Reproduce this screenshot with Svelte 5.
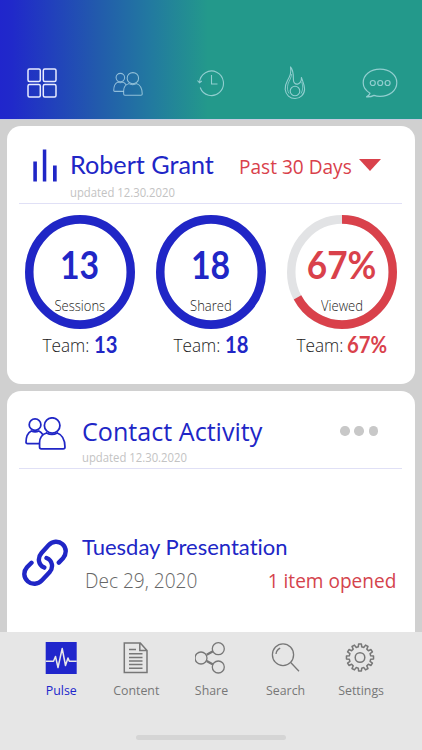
<script>
  const metrics = [
    { value: '13', label: 'Sessions', team: '13', percent: 100, tone: 'blue' },
    { value: '18', label: 'Shared', team: '18', percent: 100, tone: 'blue' },
    { value: '67%', label: 'Viewed', team: '67%', percent: 67, tone: 'red' }
  ];
  const tabs = ['Pulse', 'Content', 'Share', 'Search', 'Settings'];

  // Outline of a gear with square teeth, centred on the origin.
  function gear(teeth, outer, inner) {
    const step = (Math.PI * 2) / teeth;
    const points = [];
    for (let i = 0; i < teeth; i++) {
      const a = i * step - Math.PI / 2;
      for (const [offset, r] of [[-0.3, inner], [-0.2, outer], [0.2, outer], [0.3, inner]]) {
        points.push(`${(Math.cos(a + offset * step) * r).toFixed(2)} ${(Math.sin(a + offset * step) * r).toFixed(2)}`);
      }
    }
    return `M${points.join('L')}Z`;
  }
  const gearPath = gear(12, 13.6, 10.8);
</script>

{#snippet people(width, height, stroke)}
  <svg {width} {height} viewBox="0 0 40 32" preserveAspectRatio="none" fill="none" stroke="currentColor" stroke-width={stroke} stroke-linejoin="round" stroke-linecap="round">
    <ellipse cx="26.5" cy="8.2" rx="7.6" ry="7.4" />
    <path d="M21 15.5C16.500 17 14.200 20.500 14.200 25v4.200c0 1 .7 1.700 1.700 1.700h21.400c1 0 1.700-.7 1.700-1.700C39 22 37 17.500 31.500 15.500M21 15.500c3 1.600 7.500 1.600 10.500 0" />
    <ellipse cx="9.800" cy="7.400" rx="5.700" ry="5.600" />
    <path d="M13.500 25.800H2.300c-.8 0-1.300-.5-1.300-1.300C1 19 2.500 15.300 6.200 13.500c2.300 1.200 5 1.200 7.300 0c1.500.7 2.700 1.700 3.600 3.200" />
  </svg>
{/snippet}

<div class="screen">
  <header>
    <div class="slot active">
      <svg width="30" height="30" viewBox="0 0 30 30" fill="none" stroke="currentColor" stroke-width="1.5">
        <rect x="1" y="1" width="12.300" height="12.500" rx="1.500" />
        <rect x="16.300" y="1" width="12.700" height="12.500" rx="1.500" />
        <rect x="1" y="16.400" width="12.300" height="12.500" rx="1.500" />
        <rect x="16.300" y="16.400" width="12.700" height="12.500" rx="1.500" />
      </svg>
    </div>
    <div class="slot group">{@render people(30, 24, 1.4)}</div>
    <div class="slot">
      <svg width="28" height="28" viewBox="0 0 28 28" fill="none" stroke="currentColor" stroke-width="1.1">
        <path d="M2.500 13.500A12 12.300 0 1 1 3.200 18.500M.5 11.500l2 2.300 2.300-1.800M14.500 6v9h6" />
      </svg>
    </div>
    <div class="slot flame">
      <svg width="22" height="34" viewBox="0 0 22 34" fill="none" stroke="currentColor" stroke-width="1.100" stroke-linejoin="round">
        <path d="M6.500 1C7.500 7 6 10 3.500 14.500c-2 3.500-2.600 5.500-2.300 9C1.800 29 6 32.500 11 32.500s9.600-4 9.600-9.500c0-4-1.600-7-3.200-11.500c.2 3-.8 5.500-3.400 6.500c-3 .8-4.600-1.500-4.600-4.500C9.400 8 9.500 4 6.500 1Z" />
        <path d="M7.500 8c.3 3-2.500 7-3.500 10c-1 4-.6 7 1 9.500M17.800 16c1.200 4 1.400 8-.8 11.500" stroke-width=".8" />
        <ellipse cx="11" cy="25" rx="4.800" ry="4.800" />
      </svg>
    </div>
    <div class="slot">
      <svg width="36" height="30" viewBox="0 0 36 30" fill="none" stroke="currentColor" stroke-width="1.200" stroke-linejoin="round">
        <path d="M8 25.300C3.500 22.500 1.200 19 1.200 14.800C1.200 7 8.500 1.200 18 1.200s16.800 5.800 16.800 13.600S27.500 28.300 18 28.300c-2.200 0-4.200-.3-6-.9c-2.300 1.200-4.800 1.600-7.500 1.400c2-.8 3-1.900 3.500-3.500Z" />
        <circle cx="10.800" cy="15" r="2.500" /><circle cx="18.200" cy="15" r="2.500" /><circle cx="25.600" cy="15" r="2.500" />
      </svg>
    </div>
  </header>

  <main>
    <section class="card summary">
      <div class="head">
        <svg class="bars" width="25" height="33" viewBox="0 0 25 33" fill="currentColor">
          <rect x="0.300" y="12.500" width="3.600" height="20" /><rect x="9.800" y="0.500" width="3.500" height="32" /><rect x="20" y="16.500" width="3.700" height="16" />
        </svg>
        <div class="titles">
          <h1><span>Robert Grant</span></h1>
          <p class="updated"><span>updated 12.30.2020</span></p>
        </div>
        <button class="range">
          <span>Past 30 Days</span>
          <svg width="22" height="12" viewBox="0 0 22 12"><path d="M0 0H22L11 12Z" fill="currentColor" /></svg>
        </button>
      </div>
      <div class="metrics">
        {#each metrics as m}
          <div class="metric {m.tone}">
            <div class="ring">
              <svg width="110" height="114" viewBox="0 0 114 114" preserveAspectRatio="none" fill="none" stroke-width="8.800">
                <circle cx="57" cy="57" r="52.600" stroke="#e2e3e5" />
                <circle cx="57" cy="57" r="52.600" stroke="currentColor" pathLength="100" stroke-dasharray={m.percent === 100 ? 'none' : `${m.percent} 100`} transform="rotate(-90 57 57)" />
              </svg>
              <div class="reading">
                <strong>{m.value}</strong>
                <span>{m.label}</span>
              </div>
            </div>
            <p class="team"><span>Team:</span><b>{m.team}</b></p>
          </div>
        {/each}
      </div>
    </section>

    <section class="card activity">
      <div class="head">
        <div class="icon">{@render people(41, 33, 1.7)}</div>
        <div class="titles">
          <h2><span>Contact Activity</span></h2>
          <p class="updated"><span>updated 12.30.2020</span></p>
        </div>
        <div class="more"><i></i><i></i><i></i></div>
      </div>
      <div class="item">
        <svg width="46" height="48" viewBox="0 0 46 48" fill="none" stroke="currentColor" stroke-width="4.400" stroke-linecap="round">
          <path d="M22.300 28.600C15.800 25.500 15.500 18.500 19.500 14L26.500 6.300C30.500 2 36.500 1.600 40.500 5.200C44.700 9 44.700 15 41 19.300L36.800 23.600" />
          <path d="M24.500 19C30.800 21.500 31.600 28.600 27.500 33.300L20 41.300C16 45.500 10 46 5.800 42.300C1.300 38.300 1.300 32.500 5 28.300L9.500 23.800" />
        </svg>
        <div class="detail">
          <h3><span>Tuesday Presentation</span></h3>
          <div class="meta">
            <span class="date">Dec 29, 2020</span>
            <span class="opened">1 item opened</span>
          </div>
        </div>
      </div>
    </section>
  </main>

  <nav>
    <ul>
      {#each tabs as tab, i}
        <li class:selected={i === 0}>
          <svg width="32" height="34" viewBox="0 0 32 34" fill="none" stroke="currentColor" stroke-width="1.300">
            {#if tab === 'Pulse'}
              <rect x="0.700" y="1" width="31" height="32" fill="currentColor" stroke="none" />
              <path d="M.7 20.300H8.500L10.500 15.500 13 26.500 17.200 7.500 20.500 24.500 23 17 24.300 20.300H31.700" stroke="#e8e8e8" stroke-width="1.500" stroke-linejoin="round" />
            {:else if tab === 'Content'}
              <path d="M4.300 2H20.300L27 9.500V31.500H4.300ZM19.800 2V9.500H27" stroke-width="1.500" />
              <path d="M9 8.500H16M9 12.800H22.500M9 16.500H22.500M9 20H22.500M9 23.500H22.500M9 27.300H22.500" stroke-width="1.500" />
            {:else if tab === 'Share'}
              <circle cx="6" cy="17" r="6" /><circle cx="23.300" cy="7.700" r="6" /><circle cx="23.300" cy="26" r="6" />
              <path d="M11.700 13.700L18 10.300M11.700 20L18 23.500" stroke-width="2.400" />
            {:else if tab === 'Search'}
              <ellipse cx="13" cy="13.700" rx="10.600" ry="10.900" /><path d="M20.700 21.500L29 30.300M6 13c.3-2.800 1.800-4.800 4.200-5.900" />
            {:else}
              <g transform="translate(15 16.500)"><path d={gearPath} stroke-linejoin="round" stroke-width="1.500" /><circle r="4.800" stroke-width="1.500" /></g>
            {/if}
          </svg>
          <span>{tab}</span>
        </li>
      {/each}
    </ul>
    <div class="home"></div>
  </nav>
</div>

<style>
  :global(body) { margin: 0; }
  .screen {
    width: 422px; height: 750px; overflow: hidden;
    display: flex; flex-direction: column;
    background: #d0d0d0; font-family: 'Open Sans', 'Noto Sans', sans-serif;
  }
  svg { display: block; flex: none; }
  h1, h2, h3, p, ul { margin: 0; padding: 0; font-weight: 400; }
  h1 span, h2 span, h3 span, .updated span, .range span, .date, .opened { display: inline-block; white-space: nowrap; transform-origin: left; }

  header {
    flex: none; box-sizing: border-box; height: 119px; padding-top: 46px;
    display: grid; grid-template-columns: repeat(5, 1fr);
    background: linear-gradient(90deg, #2026cc 0, #2029ca 12px, #2259ad 95px, #2279a0 150px, #23998b 208px);
    box-shadow: 0 1px 0 #c6cbe0;
  }
  .slot { display: flex; align-items: center; justify-content: center; color: rgba(205, 235, 245, .65); }
  .slot.active { color: #e8ecff; }
  .slot.group { padding: 3px 0 0 2px; }

  main { flex: 1; min-height: 0; margin-top: 1px; padding: 6px 7px 0; display: flex; flex-direction: column; gap: 7px; overflow: hidden; }
  .card { flex: none; background: #fff; border-radius: 14px; color: #2026c6; }
  .summary { height: 258px; }
  .activity { height: 280px; }
  .head { display: flex; box-sizing: border-box; margin: 0 13px 0 12px; height: 78px; border-bottom: 1.500px solid #e0e0f6; }

  .bars { margin: 23px 12px 0 14px; }
  .titles { flex: 1; }
  .summary .titles { padding-top: 25px; }
  h1 { height: 28px; font: 400 24.500px/28px Lato, sans-serif; }
  h1 span { transform: scaleX(1.028); }
  .updated { height: 14px; font-size: 12px; line-height: 14px; color: #c3c3c3; }
  .updated span { transform: scaleX(.942); }
  .summary .updated { margin-top: 7px; }
  .range {
    display: flex; align-items: center; gap: 6px; height: 28px; margin: 26px 21px 0 0; padding: 0;
    border: 0; background: none; color: #d9414b; font: 400 20.500px/28px 'Open Sans', sans-serif;
  }
  .range span { width: 114px; transform: scaleX(.93); }
  .range svg { margin-top: -2px; }

  .metrics { display: flex; padding: 10px 7.500px 0; }
  .metric { width: 131px; display: flex; flex-direction: column; align-items: center; }
  .red { color: #d9414b; }
  .blue { color: #2026c6; }
  .ring { display: grid; width: 110px; height: 114px; margin-top: .5px; }
  .ring > * { grid-area: 1 / 1; }
  .reading { display: flex; flex-direction: column; align-items: center; padding-top: 29.500px; }
  .reading strong { font: 700 38px/40px Lato, sans-serif; transform: scaleX(.925); }
  .blue .reading strong { transform: translateX(-.5px) scaleX(.89); }
  .reading span { margin-top: 12.500px; font-size: 14.300px; line-height: 18px; font-weight: 300; color: #222; transform: scaleX(.91); }
  .team { display: flex; justify-content: center; margin-top: 4.500px; height: 24px; line-height: 24px; font-size: 18.500px; font-weight: 300; color: #222; white-space: nowrap; }
  .team span { transform: scaleX(.93); transform-origin: right; }
  .team b { font: 700 23px/23px Lato, sans-serif; margin-left: 4px; transform: scaleX(.88); transform-origin: left; }
  .red .team { margin-left: 2px; }
  .blue b { color: #2026c6; }
  .red b { color: #d9414b; }

  .activity .icon { margin: 26px 16px 0 6px; }
  .activity .titles { padding-top: 24px; }
  h2 { height: 32px; font-size: 26px; line-height: 32px; }
  h2 span { transform: scaleX(.966); }
  .activity .updated { margin-top: 4px; }
  .more { display: flex; gap: 4.700px; margin: 35px 24px 0 0; }
  .more i { width: 9.500px; height: 9.500px; border-radius: 50%; background: #c8c8c8; }
  .item { display: flex; padding: 63px 19px 0 15px; }
  .item svg { margin-top: 7px; }
  .detail { flex: 1; margin-left: 14px; padding-top: 1px; }
  h3 { height: 28px; font: 400 22px/28px Lato, sans-serif; font-variant-ligatures: none; }
  .meta { display: flex; justify-content: space-between; padding: 5px 0 0 3px; font-size: 20.500px; line-height: 28px; }
  .date { color: #666; font-weight: 300; transform: scaleX(.93); }
  .opened { color: #d4434c; transform: scaleX(.93); transform-origin: right; }

  nav { flex: none; height: 118px; background: #e6e6e6; }
  ul { display: grid; grid-template-columns: repeat(5, 75px); justify-content: center; padding-top: 9px; list-style: none; }
  li { display: flex; flex-direction: column; align-items: center; color: #777; font-size: 13px; line-height: 18px; }
  li span { margin-top: 6px; transform: scaleX(.95); }
  li.selected { color: #2026cc; }
  .home { width: 150px; height: 5px; margin: 36px auto 0; border-radius: 3px; background: #d5d5d5; }
</style>
